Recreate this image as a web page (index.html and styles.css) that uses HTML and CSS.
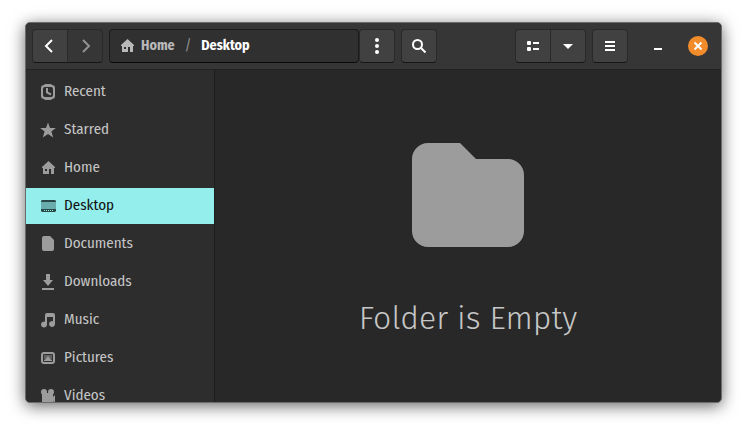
FILE: index.html
```html
<!DOCTYPE html>
<html lang="en">
<head>
<meta charset="utf-8">
<meta name="viewport" content="width=device-width, initial-scale=1">
<title>Desktop</title>
<link rel="stylesheet" href="styles.css">
</head>
<body>
<svg class="defs" aria-hidden="true">
  <symbol id="home-icon" viewBox="0 0 16 16"><path fill-rule="evenodd" d="M8.500 1 15 7v1h-1v6h-3V9H9v5H3V8H2V7zM5 9v2h2V9z"/></symbol>
</svg>
<main class="window">
  <header class="bar">
    <div class="group">
      <button class="btn" aria-label="Back"><svg viewBox="0 0 16 16"><path class="line" d="M10 2 4 8l6 6"/></svg></button>
      <button class="btn off" aria-label="Forward" disabled><svg viewBox="0 0 16 16"><path class="line" d="M6 2l6 6-6 6"/></svg></button>
    </div>
    <div class="location">
      <nav class="path" aria-label="Location">
        <a class="crumb" href="#home"><svg viewBox="0 0 16 16"><use href="#home-icon"/></svg>Home</a>
        <span class="slash">/</span>
        <a class="crumb current" href="#desktop">Desktop</a>
      </nav>
      <button class="btn" aria-label="Folder menu"><svg viewBox="0 0 16 16"><circle cx="8" cy="2" r="2"/><circle cx="8" cy="8" r="2"/><circle cx="8" cy="14" r="2"/></svg></button>
    </div>
    <button class="btn" aria-label="Search"><svg viewBox="0 0 16 16"><circle class="line" cx="6.500" cy="6.500" r="4.500"/><path class="line" d="m10 10 4.500 4.500"/></svg></button>
    <div class="group right">
      <button class="btn" aria-label="List view"><svg viewBox="0 0 16 16"><rect x="2" y="3" width="4" height="4" rx="1"/><rect x="2" y="9" width="4" height="4" rx="1"/><path d="M8 4h6v2H8zM8 10h6v2H8z"/></svg></button>
      <button class="btn" aria-label="View options"><svg viewBox="0 0 16 16"><path d="M3 6h10l-5 5z"/></svg></button>
    </div>
    <button class="btn" aria-label="Main menu"><svg viewBox="0 0 16 16"><path d="M3 3h10v2H3zM3 7h10v2H3zM3 11h10v2H3z"/></svg></button>
    <div class="controls">
      <button class="min" aria-label="Minimize"><svg viewBox="0 0 16 16"><path d="M4 10h8v2H4z"/></svg></button>
      <button class="close" aria-label="Close"><svg viewBox="0 0 20 20"><path class="line" d="m6.500 6.500 7 7m0-7-7 7"/></svg></button>
    </div>
  </header>
  <div class="body">
    <nav class="side" aria-label="Places">
      <a class="place" href="#recent"><svg viewBox="0 0 16 16"><path fill-rule="evenodd" d="M5 0h6l1 1q3 0 3 3v8q0 3-3 3l-1 1H5l-1-1q-3 0-3-3V4q0-3 3-3zM5 3Q3 3 3 5v6q0 2 2 2h6q2 0 2-2V5q0-2-2-2z"/><path class="line" d="M7 4v4.500l4 2"/></svg>Recent</a>
      <a class="place" href="#starred"><svg viewBox="0 0 16 16"><path d="m8 .5 2 5.500h5.800L11.400 9.600l1.800 6L8 12l-5.200 3.600 1.800-6L.2 6H6z"/></svg>Starred</a>
      <a class="place" href="#home"><svg viewBox="0 0 16 16"><use href="#home-icon"/></svg>Home</a>
      <a class="place active" href="#desktop" aria-current="page"><svg viewBox="0 0 16 16"><path fill="#69adac" d="M1 4h15v8H1z"/><path fill="#2a4847" d="M2 2h13l1 1v1H1V3zM1 11h15v2l-1 1H2l-1-1z"/><path fill="#93eeec" d="M4 12h1v1H4zM6 12h1v1H6zM8 12h1v1H8zM10 12h1v1h-1zM12 12h1v1h-1z"/></svg>Desktop</a>
      <a class="place" href="#documents"><svg viewBox="0 0 16 16"><path d="M4 0h6l4 4v9q0 2-2 2H4q-2 0-2-2V2q0-2 2-2z"/></svg>Documents</a>
      <a class="place" href="#downloads"><svg viewBox="0 0 16 16"><path d="M6 0h4v6h3l-5 6-5-6h3zM2 14h12v2H2z"/></svg>Downloads</a>
      <a class="place" href="#music"><svg viewBox="0 0 16 16"><path fill-rule="evenodd" d="M7 1h6q2 0 2 2v9a3 3 0 1 1-2-2.800V5H7v7.500a3 3 0 1 1-2-2.800V3q0-2 2-2z"/></svg>Music</a>
      <a class="place" href="#pictures"><svg viewBox="0 0 16 16"><rect class="line" x="2" y="3" width="12" height="10" rx="2"/><path opacity=".5" d="M4 5h8v4H4z"/><path d="M4 11v-1l2-1 2-3 2 3 2 1v1z"/></svg>Pictures</a>
      <a class="place" href="#videos"><svg viewBox="0 0 16 16"><circle cx="4" cy="4" r="3"/><circle cx="11" cy="4" r="3"/><path d="M2 5h11v4l2-2v8l-2-2v2H2z"/></svg>Videos</a>
    </nav>
    <section class="empty">
      <svg class="folder" viewBox="0 0 128 128"><path d="M24 12h32l16 16h32a16 16 0 0 1 16 16v56a16 16 0 0 1-16 16H24a16 16 0 0 1-16-16V28a16 16 0 0 1 16-16z"/></svg>
      <h1>Folder is Empty</h1>
    </section>
  </div>
</main>
</body>
</html>
```
FILE: styles.css
```css
* { box-sizing: border-box; }

body {
  display: flex;
  height: 100vh;
  margin: 0;
  padding: 22px 25px 28px;
  background: #fff;
  color: #c6c6c6;
  font: 15px/20px "Fira Sans Condensed", "Open Sans", "Noto Sans", sans-serif;
}

.defs { display: none; }

svg {
  flex: none;
  width: 16px;
  height: 16px;
  fill: currentColor;
}

.line {
  fill: none;
  stroke: currentColor;
  stroke-width: 2;
}

a { color: inherit; text-decoration: none; }

.window {
  display: flex;
  flex: 1;
  flex-direction: column;
  min-width: 0;
  overflow: hidden;
  border: 1px solid #6b6b6b;
  border-radius: 5px;
  background: #282828;
  box-shadow: 0 3px 16px rgba(0, 0, 0, .6);
}

.bar {
  display: flex;
  flex: none;
  align-items: center;
  gap: 6px;
  padding: 6px;
  border-bottom: 1px solid #222;
  background: #363636;
}

.group, .location { display: flex; }

.btn {
  display: flex;
  align-items: center;
  justify-content: center;
  width: 36px;
  height: 34px;
  padding: 0;
  border: 1px solid #292929;
  border-bottom-color: #151515;
  border-radius: 4px;
  background: #414141;
  color: #fff;
}

.group .btn:first-child { border-radius: 4px 0 0 4px; }

.group .btn:last-child {
  width: 35px;
  border-left: 0;
  border-radius: 0 4px 4px 0;
}

.btn.off { background: #363636; color: #929292; }

.location {
  flex: 1;
  max-width: 286px;
}

.path {
  display: flex;
  flex: 1;
  align-items: center;
  gap: 10px;
  padding: 0 9px;
  border: 1px solid #1b1b1b;
  border-bottom-color: #080808;
  border-radius: 4px;
  background: #303030;
  font-size: 14px;
  font-weight: 700;
}

.crumb {
  display: flex;
  align-items: center;
  gap: 6px;
  color: #b9b9b9;
}

.crumb.current { color: #fff; }

.slash { color: #929292; font-weight: 400; }

.right { margin-left: auto; }

.controls {
  display: flex;
  align-items: center;
  gap: 22px;
  padding: 0 7px 0 16px;
}

.min, .close {
  display: flex;
  padding: 0;
  border: 0;
  background: none;
  color: #fff;
}

.close {
  border-radius: 50%;
  background: #f28b2a;
}

.close svg { width: 20px; height: 20px; }

.body {
  display: flex;
  flex: 1;
  min-height: 0;
}

.side {
  display: flex;
  flex: none;
  flex-direction: column;
  gap: 2px;
  width: 189px;
  padding-top: 4px;
  overflow: hidden;
  border-right: 1px solid #1c1c1c;
  background: #2d2d2d;
}

.place {
  display: flex;
  flex: none;
  align-items: center;
  gap: 8px;
  height: 36px;
  padding: 0 14px 2px;
}

.place svg { margin-top: 2px; color: #9c9c9c; }

.place.active { background: #93eeec; color: #111; }

.empty {
  display: flex;
  flex: 1;
  flex-direction: column;
  align-items: center;
  justify-content: center;
  gap: 36px;
}

.folder {
  width: 128px;
  height: 128px;
  color: #9c9c9c;
}

h1 {
  margin: 0;
  font-family: "Fira Sans", "Fira Sans Condensed", "Open Sans", sans-serif;
  font-size: 32px;
  font-weight: 300;
  line-height: 46px;
}
```
